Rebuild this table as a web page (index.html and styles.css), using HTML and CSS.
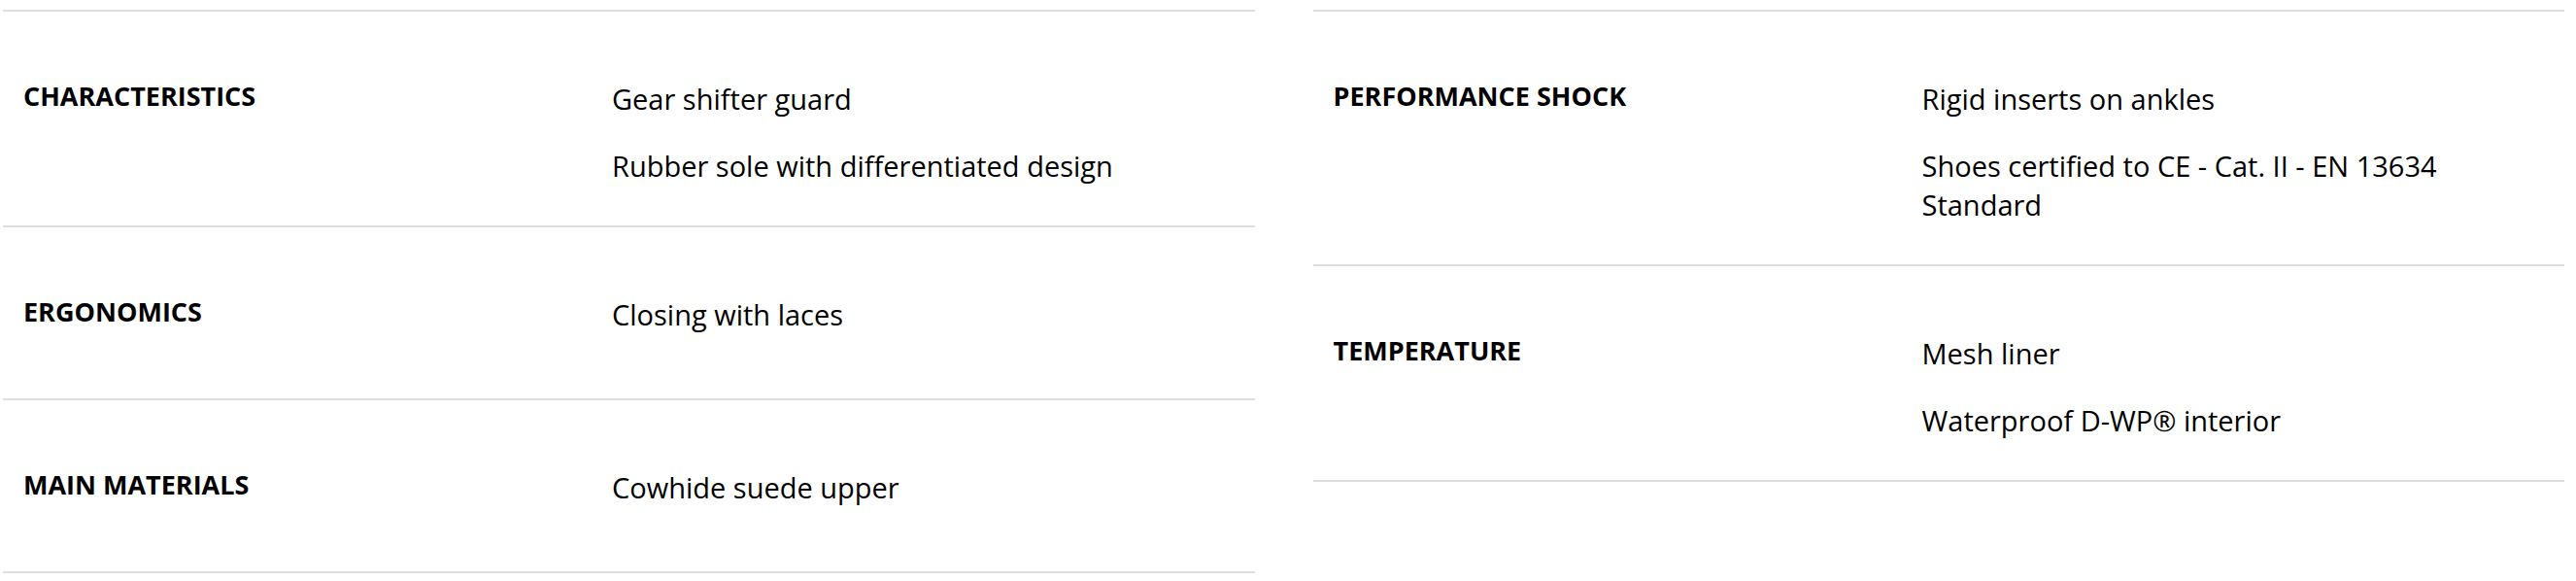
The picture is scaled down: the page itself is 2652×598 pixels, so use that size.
FILE: index.html
```html
<!DOCTYPE html>
<html lang="en">
<head>
<meta charset="utf-8">
<title>Specifications</title>
<link rel="stylesheet" href="styles.css">
</head>
<body>
<div class="specs">
  <div class="spec-table">
    <div class="spec-row">
      <div class="spec-label">CHARACTERISTICS</div>
      <ul class="spec-values">
        <li>Gear shifter guard</li>
        <li>Rubber sole with differentiated design</li>
      </ul>
    </div>
    <div class="spec-row">
      <div class="spec-label">ERGONOMICS</div>
      <ul class="spec-values">
        <li>Closing with laces</li>
      </ul>
    </div>
    <div class="spec-row">
      <div class="spec-label">MAIN MATERIALS</div>
      <ul class="spec-values">
        <li>Cowhide suede upper</li>
      </ul>
    </div>
  </div>
  <div class="spec-table">
    <div class="spec-row">
      <div class="spec-label">PERFORMANCE SHOCK</div>
      <ul class="spec-values">
        <li>Rigid inserts on ankles</li>
        <li>Shoes certified to CE - Cat. II - EN 13634 Standard</li>
      </ul>
    </div>
    <div class="spec-row">
      <div class="spec-label">TEMPERATURE</div>
      <ul class="spec-values">
        <li>Mesh liner</li>
        <li>Waterproof D-WP® interior</li>
      </ul>
    </div>
  </div>
</div>
</body>
</html>
```
FILE: styles.css
```css
html, body {
  margin: 0;
  padding: 0;
  background: #fff;
}
body {
  font-family: "Open Sans", "Noto Sans", sans-serif;
  color: #000;
}
.specs {
  display: grid;
  grid-template-columns: 1fr 1fr;
  column-gap: 60px;
  align-items: start;
  padding: 10px 12px 0 3px;
}
.spec-table {
  border-top: 2px solid #dedede;
}
.spec-row {
  display: grid;
  grid-template-columns: 606px 1fr;
  box-sizing: border-box;
  min-height: 178px;
  padding: 67px 60px 41px 21px;
  border-bottom: 2px solid #dedede;
}
.spec-label {
  font-weight: 700;
  font-size: 27px;
  line-height: 40px;
}
.spec-values {
  list-style: none;
  margin: 3px 0 0;
  padding: 0;
  display: flex;
  flex-direction: column;
  gap: 29px;
  font-size: 29px;
  line-height: 40px;
}
.spec-values li {
  margin: 0;
}
```
